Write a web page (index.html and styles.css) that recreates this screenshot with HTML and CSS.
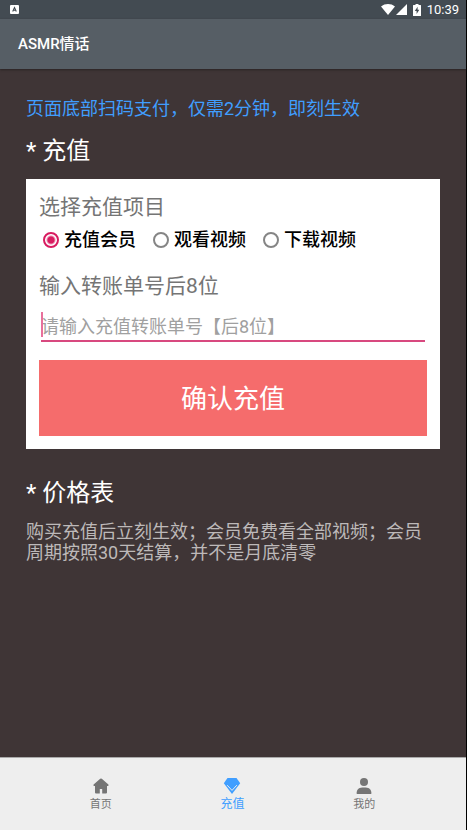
FILE: index.html
```html
<!DOCTYPE html>
<html lang="zh-CN">
<head>
<meta charset="utf-8">
<meta name="viewport" content="width=device-width, initial-scale=1">
<title>ASMR情话</title>
<link rel="stylesheet" href="styles.css">
</head>
<body>
<div class="status">
  <svg class="status-app" viewBox="0 0 9 9" width="9" height="9" aria-hidden="true"><rect width="9" height="9" rx="1" fill="#fff"/><path d="M2.7 6.5 4.5 2.5 6.3 6.5M3.2 5.2H5.8" fill="none" stroke="#434b52" stroke-width="1.1"/></svg>
  <div class="status-right">
    <svg viewBox="0 0 14 11" width="14" height="11" aria-hidden="true"><path d="M0 2.5C4-.8 10-.8 14 2.5L7 11Z" fill="#fff"/></svg>
    <svg viewBox="0 0 11 11" width="11" height="11" aria-hidden="true"><path d="M11 0V11H0Z" fill="#fff"/></svg>
    <svg class="battery" viewBox="0 0 8 12" width="8" height="12" aria-hidden="true"><path d="M2.5 0H5.5V1H7.5Q8 1 8 1.5V11.5Q8 12 7.5 12H.5Q0 12 0 11.5V1.5Q0 1 .5 1H2.5Z" fill="#fff"/><path d="M4.6 2.8 1.8 7H3.6V10L6.3 5.8H4.6Z" fill="#434b52"/></svg>
    <time>10:39</time>
  </div>
</div>
<header class="appbar"><h1>ASMR情话</h1></header>
<main class="content">
  <p class="notice">页面底部扫码支付，仅需2分钟，即刻生效</p>
  <h2>* 充值</h2>
  <form class="card">
    <fieldset>
      <legend class="field-title">选择充值项目</legend>
      <div class="options">
        <label><input type="radio" name="item" checked>充值会员</label>
        <label><input type="radio" name="item">观看视频</label>
        <label><input type="radio" name="item">下载视频</label>
      </div>
    </fieldset>
    <label class="field-title" for="order">输入转账单号后8位</label>
    <div class="entry"><input id="order" type="text" placeholder="请输入充值转账单号【后8位】"></div>
    <button type="button">确认充值</button>
  </form>
  <h2>* 价格表</h2>
  <p class="terms">购买充值后立刻生效；会员免费看全部视频；会员周期按照30天结算，并不是月底清零</p>
</main>
<nav class="tabs">
  <a href="#home">
    <svg viewBox="0 0 16 16" width="16" height="16" aria-hidden="true"><path d="M7.2 .8Q8 .2 8.8 .8L15.4 6.6Q16 7.8 15 8H14V14.5Q14 15.5 13 15.5H9.2V11H6.8V15.5H3Q2 15.5 2 14.5V8H1Q0 7.8 .6 6.6Z" fill="currentColor"/></svg>
    <span>首页</span>
  </a>
  <a href="#recharge" class="active" aria-current="page">
    <svg viewBox="0 0 18 16" width="18" height="16" aria-hidden="true"><path d="M4.5 0H13.5L17.2 5.2 9 16 .8 5.2Z" fill="currentColor"/><path d="M4.2 7.2 9 12.4 13.8 7.2" fill="none" stroke="#eee" stroke-width="1"/></svg>
    <span>充值</span>
  </a>
  <a href="#mine">
    <svg viewBox="0 0 16 16" width="16" height="16" aria-hidden="true"><circle cx="8" cy="4" r="4" fill="currentColor"/><path d="M.7 16V14.2C1.2 11 3.2 9.6 8 9.6S14.8 11 15.3 14.2V16Z" fill="currentColor"/></svg>
    <span>我的</span>
  </a>
</nav>
</body>
</html>
```
FILE: styles.css
```css
* {
  box-sizing: border-box;
}

body {
  margin: 0;
  min-height: 100vh;
  display: flex;
  flex-direction: column;
  background: #3f3536;
  border-right: 1px solid #000;
  font-family: Roboto, "Noto Sans CJK SC", sans-serif;
}

h1, h2, p, fieldset, legend {
  margin: 0;
  padding: 0;
  border: 0;
  font-weight: 400;
}

.status {
  display: flex;
  align-items: center;
  justify-content: space-between;
  height: 19px;
  padding: 0 7px 0 10px;
  background: #434b52;
  color: #fff;
}

.status-right {
  display: flex;
  align-items: center;
  gap: 1px;
}

.battery {
  margin: 0 5px 0 5px;
}

.status time {
  font-size: 13px;
  line-height: 19px;
}

.appbar {
  padding: 14px 18px;
  background: #565e65;
  box-shadow: 0 1px 2px #2a2424;
}

.appbar h1 {
  color: #fff;
  font-size: 15px;
  font-weight: 500;
  line-height: 22px;
}

.content {
  flex: 1;
  padding: 27px 26px;
}

.notice {
  color: #409eff;
  font-size: 18px;
  line-height: 26px;
}

h2 {
  margin: 12px 0 11px;
  color: #fff;
  font-size: 24px;
  line-height: 34px;
}

.card {
  padding: 13px;
  margin-bottom: 27px;
  background: #fff;
}

.field-title {
  display: block;
  color: #757575;
  font-size: 21px;
  line-height: 30px;
}

.options {
  display: flex;
  flex-wrap: wrap;
  gap: 17px;
  padding: 5px 4px 18px;
}

.options label {
  display: flex;
  align-items: center;
  gap: 5px;
  color: #000;
  font-size: 18px;
  font-weight: 500;
  line-height: 26px;
}

.options input {
  appearance: none;
  width: 16px;
  height: 16px;
  margin: 0;
  border: 2px solid #858585;
  border-radius: 50%;
}

.options input:checked {
  border-color: #d81b60;
  background: radial-gradient(circle, #d81b60 3px, #fff 5px);
}

.entry {
  position: relative;
  margin: 8px 2px 18px;
}

.entry::before {
  content: "";
  position: absolute;
  left: 0;
  top: 3px;
  width: 2px;
  height: 25px;
  background: #e8709c;
}

.entry input {
  display: block;
  width: 100%;
  height: 33px;
  padding: 3px 0 0;
  border: 0;
  border-bottom: 2px solid #d8497f;
  outline: 0;
  background: transparent;
  color: #000;
  font: 18px/26px Roboto, "Noto Sans CJK SC", sans-serif;
}

.entry input::placeholder {
  color: #a0a0a0;
}

.card button {
  display: block;
  width: 100%;
  padding: 20px 0 18px;
  border: 0;
  background: #f56c6c;
  color: #fff;
  font: 26px/38px Roboto, "Noto Sans CJK SC", sans-serif;
}

.terms {
  padding-right: 13px;
  color: #bdb9b9;
  font-size: 18px;
  line-height: 21px;
}

.tabs {
  display: grid;
  grid-template-columns: repeat(3, 1fr);
  padding: 20px 36px 17px 35px;
  border-top: 1px solid #aaa;
  background: #eee;
}

.tabs a {
  display: flex;
  flex-direction: column;
  align-items: center;
  gap: 2px;
  color: #757575;
  font-size: 11px;
  line-height: 17px;
  text-decoration: none;
}

.tabs .active {
  color: #409eff;
  font-size: 12px;
}
```
